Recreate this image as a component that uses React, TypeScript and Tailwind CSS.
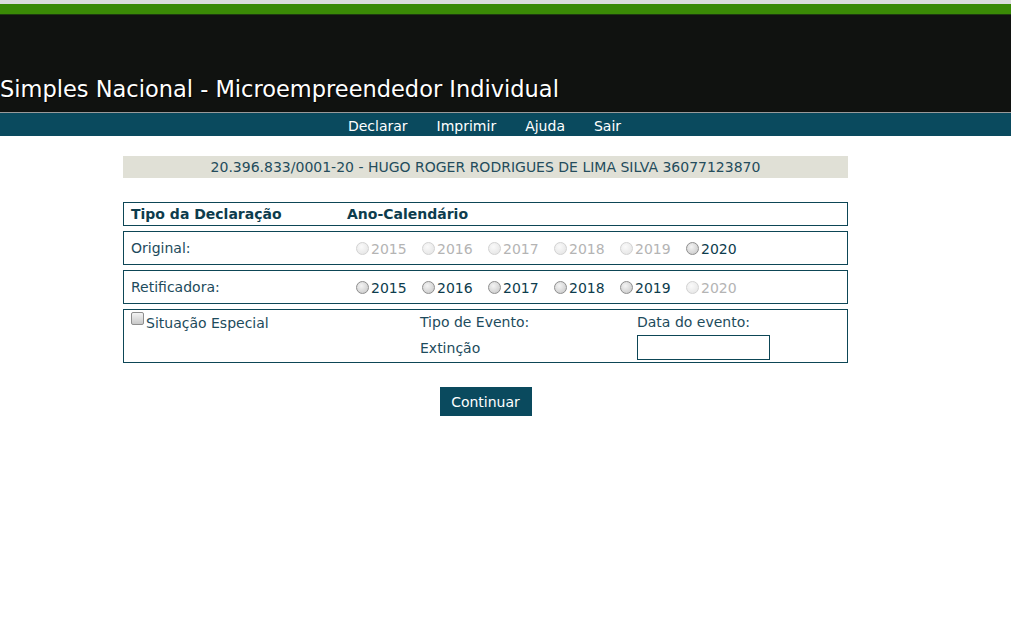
import React from "react";

const years = ["2015", "2016", "2017", "2018", "2019", "2020"];

function Radio({ enabled }: { enabled: boolean }) {
  return (
    <span
      className={
        enabled
          ? "inline-block h-[13px] w-[13px] rounded-full border border-[#8e8e8e] bg-[radial-gradient(circle_at_40%_35%,#f4f4f4,#c4c4c4)]"
          : "inline-block h-[13px] w-[13px] rounded-full border border-[#d2d2d2] bg-[radial-gradient(circle_at_40%_35%,#fafafa,#e2e2e2)]"
      }
    />
  );
}

function YearRow({ label, enabled }: { label: string; enabled: string[] }) {
  return (
    <div className="flex h-[34px] items-center border border-[#0d4656] pl-[7px]">
      <span className="w-[225px] text-[14px] text-[#1d4b5c]">{label}</span>
      <div className="flex">
        {years.map((y) => {
          const on = enabled.includes(y);
          return (
            <span key={y} className="flex w-[66px] items-center">
              <Radio enabled={on} />
              <span className={on ? "ml-[2px] mt-[3px] text-[14px] text-[#0d3c4d]" : "ml-[2px] mt-[3px] text-[14px] text-[#b4b4b4]"}>
                {y}
              </span>
            </span>
          );
        })}
      </div>
    </div>
  );
}

export default function App() {
  return (
    <div className="min-h-[630px] bg-white font-['DejaVu_Sans',Verdana,sans-serif]">
      <div className="h-[4px] bg-[#dcdcdc]" />
      <div className="h-[10px] bg-[#3a8a06]" />
      <div className="h-[1px] bg-[#1e3a10]" />
      <div className="flex h-[97px] items-end bg-[#101210] pb-[12px]">
        <h1 className="text-[22.5px] leading-none text-white [text-shadow:1px_1px_1px_#000]">
          Simples Nacional - Microempreendedor Individual
        </h1>
      </div>
      <div className="h-[1px] bg-[#9a9a9a]" />
      <nav className="flex h-[23px] items-center justify-center bg-[#0a4a5e] pt-[3px]">
        <div className="mr-[42px] flex gap-[29px] text-[14px] text-white">
          <span>Declarar</span>
          <span>Imprimir</span>
          <span>Ajuda</span>
          <span>Sair</span>
        </div>
      </nav>

      <main className="ml-[123px] w-[725px] pt-[20px]">
        <div className="flex h-[22px] items-center justify-center bg-[#e0e0d6] text-[14px] text-[#244c5c]">
          20.396.833/0001-20 - HUGO ROGER RODRIGUES DE LIMA SILVA 36077123870
        </div>

        <div className="mt-[24px] flex flex-col gap-[5px]">
          <div className="flex h-[24px] items-center border border-[#0d4656] pl-[7px] text-[14px] font-bold text-[#0d3c4d]">
            <span className="w-[216px]">Tipo da Declaração</span>
            <span>Ano-Calendário</span>
          </div>
          <YearRow label="Original:" enabled={["2020"]} />
          <YearRow label="Retificadora:" enabled={["2015", "2016", "2017", "2018", "2019"]} />
          <div className="flex h-[54px] border border-[#0d4656] pl-[7px] text-[14px] text-[#1d4b5c]">
            <div className="flex w-[289px] items-start pt-[2px]">
              <span className="inline-block h-[13px] w-[13px] rounded-[2px] border border-[#8e8e8e] bg-[linear-gradient(#f4f4f4,#c8c8c8)]" />
              <span className="ml-[2px] mt-[1px]">Situação Especial</span>
            </div>
            <div className="flex w-[217px] flex-col pt-[2px]">
              <span>Tipo de Evento:</span>
              <span className="mt-[5px]">Extinção</span>
            </div>
            <div className="flex flex-col pt-[2px]">
              <span>Data do evento:</span>
              <span className="mt-[2px] h-[25px] w-[133px] border border-[#0d4656] bg-white" />
            </div>
          </div>
        </div>

        <div className="mt-[24px] flex justify-center">
          <button className="h-[29px] w-[92px] bg-[#0a4a5e] pt-[1px] text-[14px] text-white">Continuar</button>
        </div>
      </main>
    </div>
  );
}
